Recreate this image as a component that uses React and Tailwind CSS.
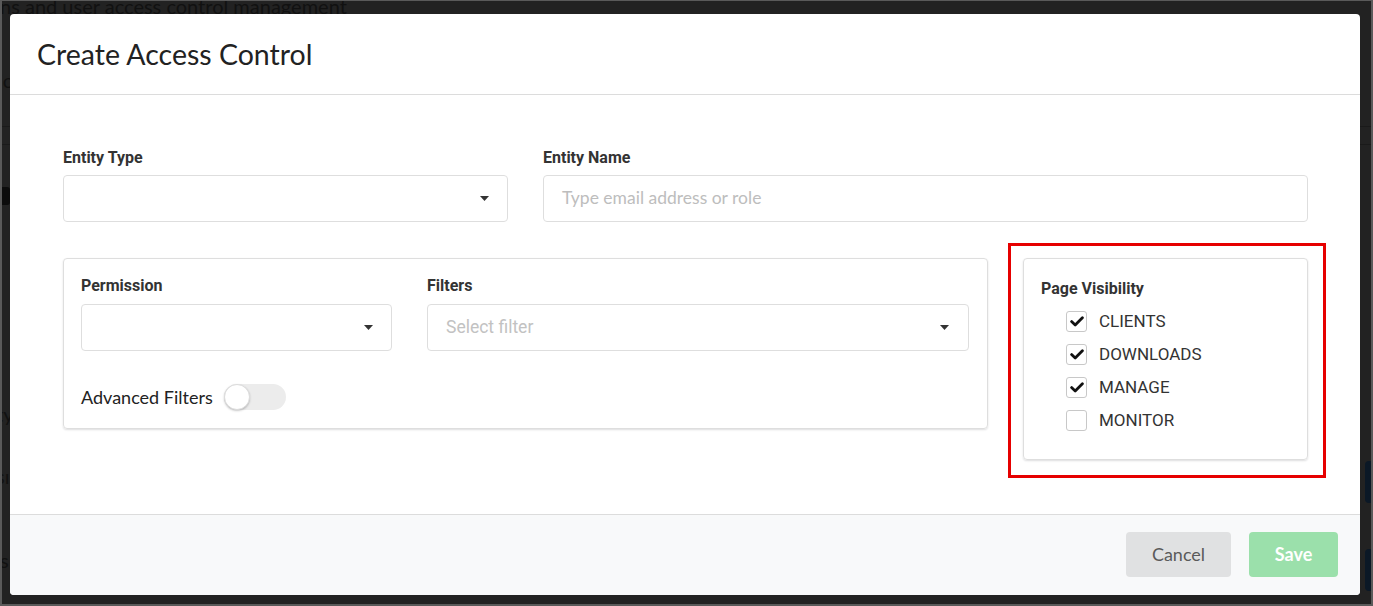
import React from "react";

const lato = { fontFamily: "Lato, 'Open Sans', sans-serif" };

function Caret() {
  return (
    <svg width="9" height="5" viewBox="0 0 9 5" className="shrink-0">
      <path d="M0 0 H9 L4.5 5 Z" fill="#333" />
    </svg>
  );
}

function Check({ checked, label }) {
  return (
    <div className="flex items-center h-[33px]">
      <div className="w-[21px] h-[21px] rounded-[3px] border border-[#c8c8c8] bg-white flex items-center justify-center">
        {checked && (
          <svg width="14" height="11" viewBox="0 0 14 11">
            <path d="M1.6 5.6 L5.2 9 L12.4 1.8" fill="none" stroke="#111" strokeWidth="2.8" strokeLinecap="round" strokeLinejoin="round" />
          </svg>
        )}
      </div>
      <span className="ml-[12px] text-[17px] text-[#333]" style={{ fontFamily: "Roboto, sans-serif" }}>
        {label}
      </span>
    </div>
  );
}

export default function App() {
  return (
    <div className="relative w-[1373px] h-[606px] overflow-hidden bg-[#222222] border-l-2 border-t border-r-2 border-b-2 border-[#5a5a5a]">
      {/* faint background page */}
      <div className="absolute left-[-2px] top-[-10px] text-[20px] text-[#111111] whitespace-nowrap" style={lato}>
        ns and user access control management
      </div>
      <div className="absolute left-[-4px] top-[64px] text-[20px] text-[#111111]" style={lato}>ic</div>
      <div className="absolute left-[-6px] top-[186px] w-[14px] h-[18px] rounded-[3px] bg-[#0c0c0c]" />
      <div className="absolute left-[-6px] top-[398px] text-[20px] text-[#111111]" style={lato}>ty</div>
      <div className="absolute left-[-6px] top-[460px] text-[20px] text-[#111111]" style={lato}>sı</div>
      <div className="absolute left-[-2px] top-[544px] text-[20px] text-[#111111]" style={lato}>s</div>
      <div className="absolute left-0 right-0 top-[125px] h-px bg-[#1a1a1a]" />
      <div className="absolute left-0 right-0 top-[143px] h-px bg-[#1a1a1a]" />
      <div className="absolute left-[1363px] top-[460px] w-[20px] h-[42px] rounded-[4px] bg-[#0b1826]" />
      <div className="absolute left-[1363px] top-[548px] w-[20px] h-[42px] rounded-[4px] bg-[#0b1826]" />

      {/* modal */}
      <div className="absolute left-[8px] top-[13px] w-[1350px] h-[581px] bg-white rounded-[4px] flex flex-col overflow-hidden">
        <div className="h-[81px] shrink-0 border-b border-[#dcdcdc] flex items-center pl-[27px]">
          <h1 className="text-[28.5px] text-[#222] leading-none" style={lato}>Create Access Control</h1>
        </div>

        <div className="flex-1 pl-[53px] pr-[52px] pt-[55px]" style={{ fontFamily: "Roboto, sans-serif" }}>
          <div className="flex gap-[35px]">
            <div className="w-[445px]">
              <div className="text-[16px] font-bold text-[#333] leading-[16px] mb-[9px]">Entity Type</div>
              <div className="h-[47px] border border-[#dedede] rounded-[4px] flex items-center justify-end pr-[18px]">
                <Caret />
              </div>
            </div>
            <div className="flex-1">
              <div className="text-[16px] font-bold text-[#333] leading-[16px] mb-[9px]">Entity Name</div>
              <div className="h-[47px] border border-[#dedede] rounded-[4px] flex items-center pl-[18px]">
                <span className="text-[17.5px] text-[#bdbdbd]" style={lato}>Type email address or role</span>
              </div>
            </div>
          </div>

          <div className="flex gap-[35px] items-start mt-[36px]">
            <div className="w-[925px] border border-[#dedede] rounded-[4px] shadow-[0_1px_2px_0_rgba(34,36,38,0.15)] pt-[19px] pb-[18px] pl-[17px] pr-[18px]">
              <div className="flex gap-[35px]">
                <div className="w-[311px]">
                  <div className="text-[16px] font-bold text-[#333] leading-[16px] mb-[10px]">Permission</div>
                  <div className="h-[47px] border border-[#dedede] rounded-[4px] flex items-center justify-end pr-[18px]">
                    <Caret />
                  </div>
                </div>
                <div className="flex-1">
                  <div className="text-[16px] font-bold text-[#333] leading-[16px] mb-[10px]">Filters</div>
                  <div className="h-[47px] border border-[#dedede] rounded-[4px] flex items-center justify-between pl-[18px] pr-[19px]">
                    <span className="text-[17.5px] text-[#c2c2c2]">Select filter</span>
                    <Caret />
                  </div>
                </div>
              </div>
              <div className="flex items-center mt-[33px] h-[26px]">
                <span className="text-[18px] text-[#222]" style={lato}>Advanced Filters</span>
                <div className="ml-[11px] relative w-[62px] h-[26px] rounded-full bg-[#ececec]">
                  <div className="absolute left-0 top-0 w-[26px] h-[26px] rounded-full bg-white border border-[#dcdcdc] shadow-[0_1px_2px_0_rgba(34,36,38,0.25)]" />
                </div>
              </div>
            </div>

            <div className="relative w-[285px]">
              <div className="absolute left-[-15px] top-[-15px] right-[-18px] bottom-[-18px] border-[3px] border-[#e60000] pointer-events-none" />
              <div className="border border-[#dedede] rounded-[4px] shadow-[0_1px_2px_0_rgba(34,36,38,0.15)] pt-[22px] pb-[22px] pl-[17px]">
                <div className="text-[16px] font-bold text-[#333] leading-[16px] mb-[8px]">Page Visibility</div>
                <div className="pl-[25px]">
                  <Check checked label="CLIENTS" />
                  <Check checked label="DOWNLOADS" />
                  <Check checked label="MANAGE" />
                  <Check label="MONITOR" />
                </div>
              </div>
            </div>
          </div>
        </div>

        <div className="h-[81px] shrink-0 border-t border-[#dcdcdc] bg-[#f8f9fa] flex items-start justify-end pt-[17px] pr-[22px] gap-[18px]" style={lato}>
          <button className="w-[105px] h-[45px] rounded-[4px] bg-[#e0e1e2] text-[18px] text-[#5a5a5a]">Cancel</button>
          <button className="w-[89px] h-[45px] rounded-[4px] bg-[#9be0ab] text-[18px] font-bold text-white">Save</button>
        </div>
      </div>
    </div>
  );
}
